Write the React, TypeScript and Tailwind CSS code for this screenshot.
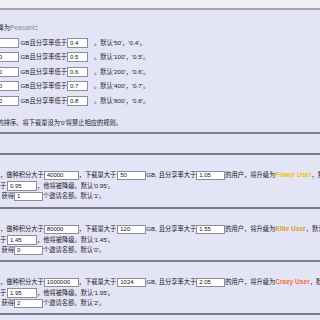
import React from "react";

const Inp = ({ v, cls }: { v: string; cls: string }) => (
  <input
    readOnly
    value={v}
    className={`shrink-0 bg-white border border-[#8c8c9c] text-[6px] text-[#111] px-[2px] outline-none font-['Liberation_Sans',sans-serif] ${cls}`}
  />
);

const Row1 = ({ a, b, d }: { a: string; b: string; d: string }) => (
  <div className="h-[14.5px] flex items-center whitespace-nowrap">
    <Inp v={a} cls="w-[30px] h-[10px] -ml-[11px]" />
    <span className="ml-[1.5px]">GB且分享率低于</span>
    <Inp v={b} cls="w-[21px] h-[10px]" />
    <span className="ml-[6px]">{d}</span>
  </div>
);

const Section = ({
  pts,
  dl,
  up,
  upCls,
  upName,
  def1,
  down,
  def2,
  inv,
  def3,
  h,
}: {
  pts: string;
  dl: string;
  up: string;
  upCls: string;
  upName: string;
  def1: string;
  down: string;
  def2: string;
  inv: string;
  def3: string;
  h: string;
}) => (
  <div className={`border-t-2 border-[#7c7c88] ${h} pt-[15px]`}>
    <div className="h-[10.5px] flex items-center whitespace-nowrap">
      <span>，做种积分大于</span>
      <Inp v={pts} cls="w-[35px] h-[9.5px]" />
      <span>，下载量大于</span>
      <Inp v={dl} cls="w-[29px] h-[9.5px] ml-[1px]" />
      <span>GB, 且分享率大于</span>
      <Inp v={up} cls="w-[29px] h-[9.5px]" />
      <span>的用户，将升级为</span>
      <b className={`font-bold text-[6.6px] font-['Liberation_Sans',sans-serif] ${upCls}`}>{upName}</b>
      <span>{def1}</span>
    </div>
    <div className="h-[10.5px] flex items-center whitespace-nowrap">
      <span className="-ml-[12.5px]">率低于</span>
      <Inp v={down} cls="w-[30px] h-[9.5px] ml-[0.75px]" />
      <span>，他将被降级。默认'{def2}'。</span>
    </div>
    <div className="h-[10.5px] flex items-center whitespace-nowrap">
      <span className="ml-[1.5px]">获得</span>
      <Inp v={inv} cls="w-[29px] h-[9.5px]" />
      <span>个邀请名额。默认'{def3}'。</span>
    </div>
  </div>
);

export default function App() {
  return (
    <div className="w-[320px] h-[320px] overflow-hidden bg-[#e4e4f7] text-[6.25px] leading-none text-[#222] font-['Liberation_Sans','Noto_Sans_CJK_SC',sans-serif]">
      <div className="h-[8px] bg-[#efeff4] overflow-hidden">
        <div className="-mt-[6px] whitespace-nowrap text-[#8a8a96] -ml-[4px]">
          的用户将被降级。默认'4'，'0.8'，'1000'。
        </div>
      </div>
      <div className="border-t-2 border-[#a4a4b2] h-[124px] pt-[11px]">
        <div className="h-[14.5px] flex items-center whitespace-nowrap">
          <span className="-ml-[8.75px]">被降为</span>
          <b className="font-bold text-[6.6px] text-[#a2a2b6] font-['Liberation_Sans',sans-serif]">Peasant</b>
          <span>：</span>
        </div>
        <Row1 a="50" b="0.4" d="。默认'50'，'0.4'。" />
        <Row1 a="100" b="0.5" d="。默认'100'，'0.5'。" />
        <Row1 a="200" b="0.6" d="。默认'200'，'0.6'。" />
        <Row1 a="400" b="0.7" d="。默认'400'，'0.7'。" />
        <Row1 a="800" b="0.8" d="。默认'800'，'0.8'。" />
        <div className="mt-[8px] h-[14px] flex items-center whitespace-nowrap">
          <span className="-ml-[8.85px]">
            则的排序。将下载量设为'0'将禁止相应的规则。
          </span>
        </div>
      </div>
      <div className="border-t-2 border-[#7c7c88] h-[21px]"></div>
      <Section
        h="h-[54px]"
        pts="40000"
        dl="50"
        up="1.05"
        upCls="text-[#eec400]"
        upName="Power User"
        def1="，默认'4'，'40000'，'50'，'1.05'。"
        down="0.95"
        def2="0.95"
        inv="1"
        def3="1"
      />
      <Section
        h="h-[53px]"
        pts="80000"
        dl="120"
        up="1.55"
        upCls="text-[#d4a41c]"
        upName="Elite User"
        def1="，默认'8'，'80000'，'120'，'1.55'。"
        down="1.45"
        def2="1.45"
        inv="0"
        def3="0"
      />
      <Section
        h="h-[53px]"
        pts="1000000"
        dl="1024"
        up="2.05"
        upCls="text-[#f2703a]"
        upName="Crazy User"
        def1="，默认'15'，'1000000'，'1024'，'2.05'。"
        down="1.95"
        def2="1.95"
        inv="2"
        def3="2"
      />
      <div className="border-t-2 border-[#7c7c88] h-[10px]"></div>
    </div>
  );
}
